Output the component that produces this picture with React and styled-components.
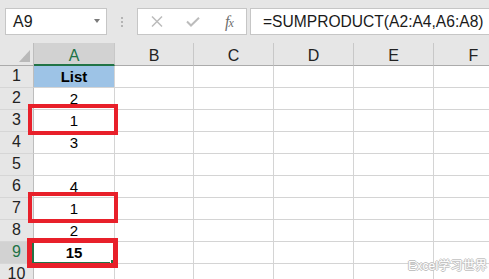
import React from "react";
import styled, { createGlobalStyle } from "styled-components";

const GlobalStyle = createGlobalStyle`
  html, body { margin: 0; padding: 0; background: #ffffff; overflow: hidden; }
  body { font-family: "Liberation Sans", Arial, sans-serif; }
`;

const Page = styled.div`
  position: relative;
  width: 489px;
  height: 279px;
  overflow: hidden;
  background: #ffffff;
`;

const FormulaBar = styled.div`
  display: flex;
  align-items: flex-start;
  height: 43px;
  box-sizing: border-box;
  padding: 8px 0 0 5px;
  background: #e6e6e6;
`;

const Field = styled.div`
  box-sizing: border-box;
  height: 27px;
  background: #ffffff;
  border: 1px solid #c6c6c6;
  flex-shrink: 0;
`;

const NameBox = styled(Field)`
  width: 102px;
  display: flex;
  align-items: center;
  justify-content: space-between;
  padding: 1px 6px 0 7px;
  font-size: 16px;
  color: #1a1a1a;
`;

const Caret = styled.span`
  width: 0;
  height: 0;
  border-left: 3.5px solid transparent;
  border-right: 3.5px solid transparent;
  border-top: 4px solid #7a7a7a;
  margin-bottom: 2px;
`;

const Grip = styled.div`
  width: 30px;
  height: 27px;
  display: flex;
  flex-direction: column;
  align-items: center;
  justify-content: center;
  gap: 2px;
  flex-shrink: 0;
`;

const GripDot = styled.span`
  width: 2px;
  height: 2px;
  background: #b4b4b4;
`;

const FxBox = styled(Field)`
  width: 110px;
  display: grid;
  grid-template-columns: repeat(3, 36px);
  align-items: center;
  justify-items: center;
  padding-left: 1px;
`;

const FxLabel = styled.span`
  font-family: "Liberation Serif", "Times New Roman", serif;
  font-style: italic;
  font-size: 16px;
  color: #6e6e6e;
  letter-spacing: -1px;
  & > small { font-size: 12px; }
`;

const FormulaInput = styled(Field)`
  flex: 1;
  margin-left: 3px;
  margin-right: -20px;
  display: flex;
  align-items: center;
  padding: 1px 0 0 12px;
  font-size: 15.6px;
  color: #1a1a1a;
  white-space: nowrap;
`;

const Grid = styled.div`
  display: grid;
  grid-template-columns: 34px 81px 79px 80px 80px 80px 80px;
  grid-template-rows: 23px repeat(10, 22px);
  width: 514px;
`;

const Corner = styled.div`
  position: relative;
  box-sizing: border-box;
  background: #e6e6e6;
  border-right: 1px solid #bdbdbd;
  border-bottom: 1px solid #ababab;
`;

const CornerTriangle = styled.span`
  position: absolute;
  right: 3px;
  bottom: 3px;
  width: 0;
  height: 0;
  border-left: 11px solid transparent;
  border-bottom: 12px solid #b9b9b9;
`;

const ColHeader = styled.div`
  box-sizing: border-box;
  background: ${(p) => (p.$active ? "#d2d2d2" : "#e6e6e6")};
  color: ${(p) => (p.$active ? "#217346" : "#222222")};
  border-right: 1px solid #c8c8c8;
  border-bottom: ${(p) => (p.$active ? "2px solid #217346" : "1px solid #ababab")};
  text-align: center;
  font-size: 16px;
  line-height: 16px;
  padding-top: 5px;
`;

const RowHeader = styled.div`
  box-sizing: border-box;
  background: ${(p) => (p.$active ? "#d2d2d2" : "#e6e6e6")};
  color: ${(p) => (p.$active ? "#217346" : "#222222")};
  border-right: 1px solid #bdbdbd;
  border-bottom: 1px solid #d6d6d6;
  display: flex;
  align-items: center;
  justify-content: center;
  font-size: 16px;
  line-height: 16px;
  padding-bottom: 1px;
`;

const Cell = styled.div`
  position: relative;
  box-sizing: border-box;
  background: ${(p) => p.$fill || "#ffffff"};
  border-right: 1px solid #d4d4d4;
  border-bottom: 1px solid #d4d4d4;
  display: flex;
  align-items: center;
  justify-content: center;
  font-size: 15px;
  line-height: 15px;
  font-weight: ${(p) => (p.$bold ? 700 : 400)};
  color: #000000;
`;

const RedMark = styled.span`
  position: absolute;
  top: ${(p) => p.$t}px;
  left: ${(p) => p.$l}px;
  right: ${(p) => p.$r}px;
  bottom: ${(p) => p.$b}px;
  border: ${(p) => p.$w}px solid #e8202a;
  z-index: 3;
  pointer-events: none;
`;

const ActiveFrame = styled.span`
  position: absolute;
  top: -1px;
  left: -2px;
  right: -1px;
  bottom: -1px;
  border: 2px solid #217346;
  z-index: 2;
`;

const FillHandle = styled.span`
  position: absolute;
  right: -3px;
  bottom: -3px;
  width: 5px;
  height: 5px;
  background: #217346;
  border-left: 1px solid #ffffff;
  border-top: 1px solid #ffffff;
`;

const Watermark = styled.div`
  position: absolute;
  left: 408px;
  top: 259px;
  font-family: "Liberation Sans", "Noto Sans CJK SC", sans-serif;
  font-size: 12px;
  line-height: 14px;
  color: #ffffff;
  letter-spacing: 0.2px;
  text-shadow: 1px 0 0 #c2c2c2, -1px 0 0 #c2c2c2, 0 1px 0 #c2c2c2, 0 -1px 0 #c2c2c2;
  z-index: 5;
`;

const CloseIcon = () => (
  <svg width="12" height="11" viewBox="0 0 12 11">
    <path d="M1 0.5 L11 10.5 M11 0.5 L1 10.5" stroke="#bcbcbc" strokeWidth="1.5" fill="none" />
  </svg>
);

const CheckIcon = () => (
  <svg width="14" height="10" viewBox="0 0 14 10">
    <path d="M1 4.5 L5 8.5 L13 0.8" stroke="#bcbcbc" strokeWidth="2" fill="none" />
  </svg>
);

const columns = ["A", "B", "C", "D", "E", "F"];

const rows = [
  { n: 1, v: "List", bold: true, fill: "#9dc3e6" },
  { n: 2, v: "2" },
  { n: 3, v: "1", mark: { t: -6, l: -6, r: -4, b: -4, w: 4 } },
  { n: 4, v: "3" },
  { n: 5, v: "" },
  { n: 6, v: "4" },
  { n: 7, v: "1", mark: { t: -6, l: -6, r: -4, b: -4, w: 4 } },
  { n: 8, v: "2" },
  { n: 9, v: "15", bold: true, active: true, mark: { t: -4, l: -7, r: -4, b: -5, w: 5 } },
  { n: 10, v: "" },
];

export default function App() {
  return (
    <Page>
      <GlobalStyle />
      <FormulaBar>
        <NameBox>
          <span>A9</span>
          <Caret />
        </NameBox>
        <Grip>
          <GripDot />
          <GripDot />
          <GripDot />
        </Grip>
        <FxBox>
          <CloseIcon />
          <CheckIcon />
          <FxLabel>
            f<small>x</small>
          </FxLabel>
        </FxBox>
        <FormulaInput>=SUMPRODUCT(A2:A4,A6:A8)</FormulaInput>
      </FormulaBar>
      <Grid>
        <Corner>
          <CornerTriangle />
        </Corner>
        {columns.map((c) => (
          <ColHeader key={c} $active={c === "A"}>
            {c}
          </ColHeader>
        ))}
        {rows.map((r) => (
          <React.Fragment key={r.n}>
            <RowHeader $active={r.active}>{r.n}</RowHeader>
            <Cell $fill={r.fill} $bold={r.bold}>
              {r.v}
              {r.active && (
                <ActiveFrame>
                  <FillHandle />
                </ActiveFrame>
              )}
              {r.mark && (
                <RedMark $t={r.mark.t} $l={r.mark.l} $r={r.mark.r} $b={r.mark.b} $w={r.mark.w} />
              )}
            </Cell>
            {columns.slice(1).map((c) => (
              <Cell key={c} />
            ))}
          </React.Fragment>
        ))}
      </Grid>
      <Watermark>Excel学习世界</Watermark>
    </Page>
  );
}
